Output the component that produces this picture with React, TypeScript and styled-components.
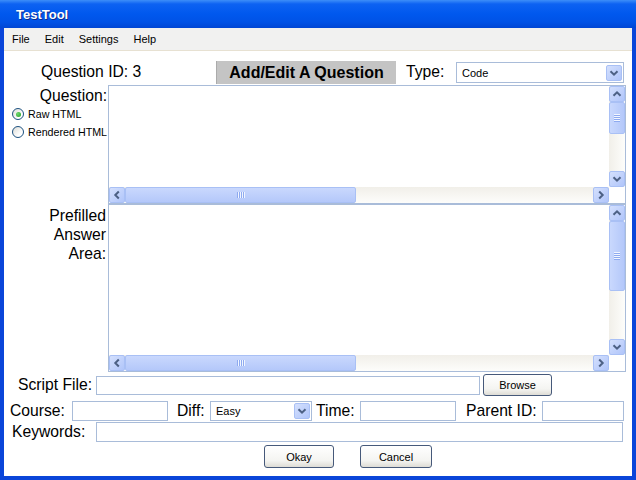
import React from 'react';
import styled, { createGlobalStyle } from 'styled-components';

const GlobalStyle = createGlobalStyle`
  html, body {
    margin: 0;
    padding: 0;
  }
  body {
    font-family: 'Liberation Sans', Arial, sans-serif;
    background: #fff;
  }
`;

const edge = '#a9bcd9';

const Window = styled.div`
  width: 636px;
  height: 480px;
  display: flex;
  flex-direction: column;
  overflow: hidden;
`;

const TitleBar = styled.div`
  height: 28px;
  flex: none;
  display: flex;
  align-items: center;
  padding-left: 16px;
  color: #fff;
  font-size: 13px;
  font-weight: bold;
  text-shadow: 1px 1px 0 #0c2a8c;
  background: linear-gradient(
    to bottom,
    #3d8ef8 0px,
    #0d62f2 4px,
    #0058ee 14px,
    #0052e6 22px,
    #0046d4 28px
  );
`;

const Frame = styled.div`
  flex: 1;
  min-height: 0;
  display: flex;
  flex-direction: column;
  border: 4px solid #0a45d9;
  border-top: none;
  background: #fff;
`;

const MenuBar = styled.div`
  height: 22px;
  flex: none;
  display: flex;
  align-items: center;
  gap: 15px;
  padding-left: 8px;
  background: #f1f1f0;
  border-bottom: 1px solid #e7e1d2;
  font-size: 11px;
  color: #000;
`;

const Content = styled.div`
  display: flex;
  flex-direction: column;
  padding-top: 10px;
  font-size: 15.7px;
  color: #000;
`;

const HeadRow = styled.div`
  height: 24px;
  display: flex;
  align-items: flex-start;
`;

const HeadLabel = styled.div<{ $width: number; $pad?: number }>`
  width: ${(p) => p.$width}px;
  padding-left: ${(p) => p.$pad ?? 0}px;
  box-sizing: border-box;
  height: 23px;
  line-height: 22px;
  flex: none;
  white-space: nowrap;
`;

const Heading = styled.div`
  width: 180px;
  height: 23px;
  flex: none;
  display: flex;
  align-items: center;
  justify-content: center;
  background: #c4c4c4;
  border-left: 1px solid #ababab;
  box-sizing: border-box;
  font-size: 16px;
  font-weight: bold;
`;

const Editors = styled.div`
  display: grid;
  grid-template-columns: 104px 518px;
  grid-template-rows: 119px 168px;
`;

const SideLabels = styled.div<{ $top: number; $right: number }>`
  padding-top: ${(p) => p.$top}px;
  padding-right: ${(p) => p.$right}px;
  text-align: right;
  line-height: 19px;
`;

const RadioRow = styled.div`
  height: 18px;
  display: flex;
  align-items: center;
  gap: 4px;
  padding-left: 8px;
  font-size: 10.7px;
  text-align: left;
  white-space: nowrap;
`;

const RadioDot = styled.span<{ $checked?: boolean }>`
  width: 12px;
  height: 12px;
  flex: none;
  box-sizing: border-box;
  border-radius: 50%;
  border: 1px solid #1c5180;
  background: linear-gradient(135deg, #dcdcd6, #fff 70%);
  display: flex;
  align-items: center;
  justify-content: center;
  &::after {
    content: '';
    width: 5px;
    height: 5px;
    border-radius: 50%;
    background: ${(p) => (p.$checked ? 'radial-gradient(circle at 35% 35%, #6fd66f, #21a121)' : 'transparent')};
  }
`;

const Area = styled.div`
  box-sizing: border-box;
  border: 1px solid ${edge};
  display: grid;
  grid-template-columns: 1fr 16px;
  grid-template-rows: 1fr 16px;
  background: #fff;
  min-height: 0;
`;

const Track = styled.div<{ $vertical?: boolean }>`
  display: flex;
  flex-direction: ${(p) => (p.$vertical ? 'column' : 'row')};
  background: linear-gradient(${(p) => (p.$vertical ? 'to right' : 'to bottom')}, #f1efe9, #fdfdfb);
  min-height: 0;
`;

const Spacer = styled.div`
  flex: 1;
`;

const ScrollBtn = styled.div`
  width: 16px;
  height: 16px;
  flex: none;
  box-sizing: border-box;
  border: 1px solid #a9c0f5;
  border-radius: 2px;
  background: linear-gradient(135deg, #d4e0fd, #b0c5fa);
  display: flex;
  align-items: center;
  justify-content: center;
`;

const Thumb = styled.div<{ $vertical?: boolean; $length: number }>`
  flex: none;
  box-sizing: border-box;
  ${(p) => (p.$vertical ? `height: ${p.$length}px; width: 16px;` : `width: ${p.$length}px; height: 16px;`)}
  border: 1px solid #a9c0f5;
  border-radius: 2px;
  background: linear-gradient(${(p) => (p.$vertical ? 'to right' : 'to bottom')}, #c9d8fd, #b4c8fa);
  display: flex;
  align-items: center;
  justify-content: center;
`;

const Corner = styled.div`
  background: #fff;
`;

const Row = styled.div<{ $height: number; $top: number }>`
  height: ${(p) => p.$height}px;
  margin-top: ${(p) => p.$top}px;
  display: flex;
  align-items: center;
`;

const FieldLabel = styled.div<{ $width: number; $pad: number }>`
  width: ${(p) => p.$width}px;
  padding-left: ${(p) => p.$pad}px;
  box-sizing: border-box;
  flex: none;
  white-space: nowrap;
`;

const TextBox = styled.input<{ $width: number; $height: number }>`
  width: ${(p) => p.$width}px;
  height: ${(p) => p.$height}px;
  box-sizing: border-box;
  flex: none;
  margin: 0;
  padding: 0 4px;
  border: 1px solid ${edge};
  background: #fff;
  outline: none;
  font: 11px 'Liberation Sans', Arial, sans-serif;
`;

const SelectBox = styled.div<{ $width: number; $height: number }>`
  width: ${(p) => p.$width}px;
  height: ${(p) => p.$height}px;
  box-sizing: border-box;
  flex: none;
  border: 1px solid ${edge};
  display: flex;
  align-items: center;
  font-size: 11px;
  padding: 1px;
`;

const SelectValue = styled.span`
  flex: 1;
  padding-left: 4px;
`;

const Button = styled.button<{ $width: number; $height: number }>`
  width: ${(p) => p.$width}px;
  height: ${(p) => p.$height}px;
  flex: none;
  margin: 0;
  padding: 0;
  box-sizing: border-box;
  border: 1px solid #46597a;
  border-radius: 3px;
  background: linear-gradient(to bottom, #ffffff, #f4f4f1 70%, #dedcd5);
  font: 11px 'Liberation Sans', Arial, sans-serif;
  color: #000;
`;

const ButtonRow = styled.div`
  height: 23px;
  margin-top: 3px;
  display: flex;
  gap: 26px;
  padding-left: 260px;
`;

type Dir = 'up' | 'down' | 'left' | 'right';
const rot: Record<Dir, number> = { down: 0, left: 90, up: 180, right: 270 };

const Arrow = ({ dir }: { dir: Dir }) => (
  <ScrollBtn>
    <svg width="10" height="10" viewBox="0 0 10 10" style={{ transform: `rotate(${rot[dir]}deg)` }}>
      <path d="M1.5 3.2 L5 6.7 L8.5 3.2" fill="none" stroke="#4d6185" strokeWidth="2" />
    </svg>
  </ScrollBtn>
);

const Grip = ({ vertical }: { vertical?: boolean }) => (
  <svg width="8" height="8" viewBox="0 0 8 8" style={{ transform: vertical ? 'none' : 'rotate(90deg)' }}>
    {[0, 2, 4, 6].map((y) => (
      <g key={y}>
        <rect x="1" y={y} width="6" height="1" fill="#f2f6ff" />
        <rect x="1" y={y + 1} width="6" height="1" fill="#8eaaf0" />
      </g>
    ))}
  </svg>
);

const ScrollArea = ({ vThumb, hThumb }: { vThumb: number; hThumb: number }) => (
  <Area>
    <div />
    <Track $vertical>
      <Arrow dir="up" />
      <Thumb $vertical $length={vThumb}>
        <Grip vertical />
      </Thumb>
      <Spacer />
      <Arrow dir="down" />
    </Track>
    <Track>
      <Arrow dir="left" />
      <Thumb $length={hThumb}>
        <Grip />
      </Thumb>
      <Spacer />
      <Arrow dir="right" />
    </Track>
    <Corner />
  </Area>
);

const Select = ({ value, width, height }: { value: string; width: number; height: number }) => (
  <SelectBox $width={width} $height={height}>
    <SelectValue>{value}</SelectValue>
    <Arrow dir="down" />
  </SelectBox>
);

export default function App() {
  return (
    <>
      <GlobalStyle />
      <Window>
        <TitleBar>TestTool</TitleBar>
        <Frame>
          <MenuBar>
            <span>File</span>
            <span>Edit</span>
            <span>Settings</span>
            <span>Help</span>
          </MenuBar>
          <Content>
            <HeadRow>
              <HeadLabel $width={212} $pad={37}>Question ID: 3</HeadLabel>
              <Heading>Add/Edit A Question</Heading>
              <HeadLabel $width={60} $pad={10}>Type:</HeadLabel>
              <div style={{ marginTop: 1 }}>
                <Select value="Code" width={168} height={21} />
              </div>
            </HeadRow>

            <Editors>
              <SideLabels $top={1} $right={1}>
                Question:
                <RadioRow>
                  <RadioDot $checked />
                  Raw HTML
                </RadioRow>
                <RadioRow>
                  <RadioDot />
                  Rendered HTML
                </RadioRow>
              </SideLabels>
              <ScrollArea vThumb={32} hThumb={231} />

              <SideLabels $top={2} $right={2}>
                Prefilled
                <br />
                Answer
                <br />
                Area:
              </SideLabels>
              <ScrollArea vThumb={70} hThumb={231} />
            </Editors>

            <Row $height={22} $top={2}>
              <FieldLabel $width={92} $pad={14}>Script File:</FieldLabel>
              <TextBox $width={384} $height={19} readOnly />
              <div style={{ width: 3 }} />
              <Button $width={69} $height={22}>Browse</Button>
            </Row>

            <Row $height={20} $top={5}>
              <FieldLabel $width={68} $pad={6}>Course:</FieldLabel>
              <TextBox $width={96} $height={20} readOnly />
              <FieldLabel $width={42} $pad={9}>Diff:</FieldLabel>
              <Select value="Easy" width={102} height={20} />
              <FieldLabel $width={48} $pad={4}>Time:</FieldLabel>
              <TextBox $width={96} $height={20} readOnly />
              <FieldLabel $width={86} $pad={10}>Parent ID:</FieldLabel>
              <TextBox $width={82} $height={20} readOnly />
            </Row>

            <Row $height={20} $top={1}>
              <FieldLabel $width={92} $pad={8}>Keywords:</FieldLabel>
              <TextBox $width={527} $height={20} readOnly />
            </Row>

            <ButtonRow>
              <Button $width={70} $height={23}>Okay</Button>
              <Button $width={72} $height={23}>Cancel</Button>
            </ButtonRow>
          </Content>
        </Frame>
      </Window>
    </>
  );
}
